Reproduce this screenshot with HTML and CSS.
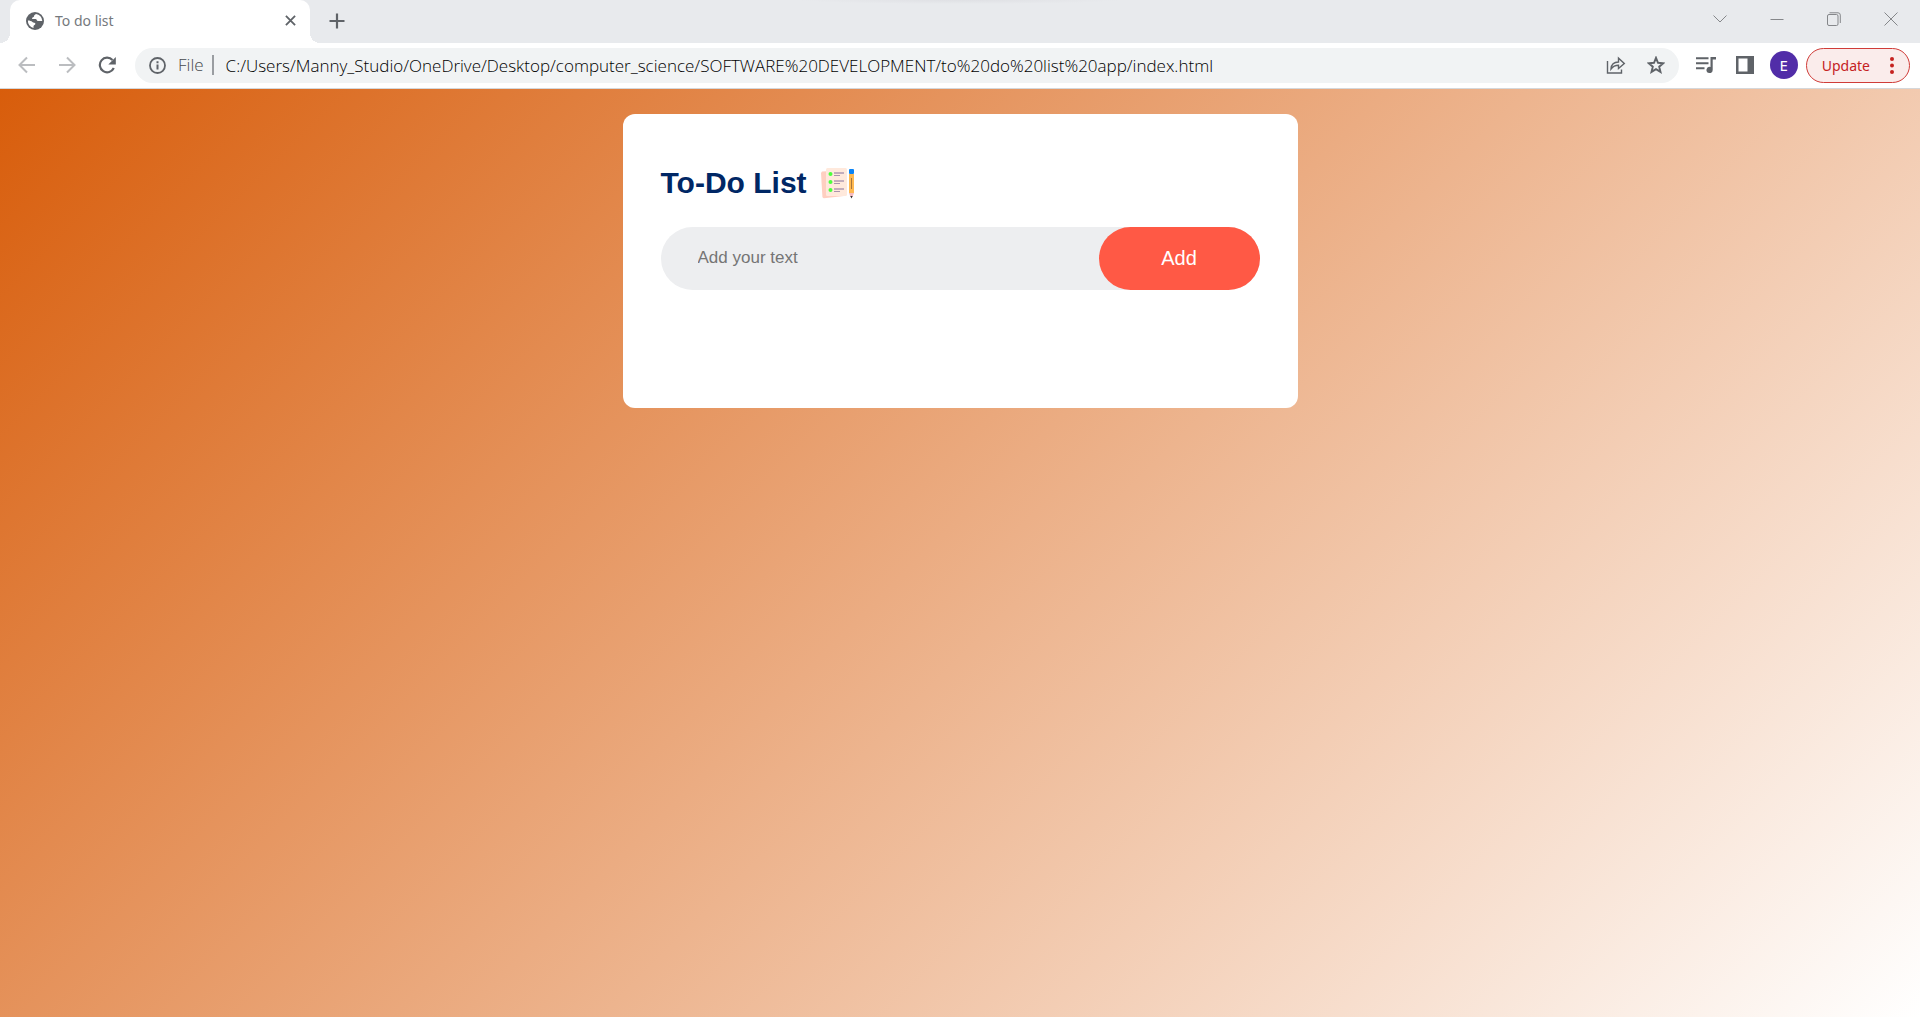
FILE: index.html
```html
<!DOCTYPE html>
<html lang="en">
<head>
<meta charset="utf-8">
<title>To do list</title>
<link rel="stylesheet" href="styles.css">
</head>
<body>
<header class="browser">
  <div class="tabstrip">
    <div class="tab">
      <svg class="globe" viewBox="0 0 18 18" aria-hidden="true"><circle cx="9" cy="9" r="9" fill="#5f6368"/><path d="M10 2c-1 1-2 1-2 2.200s-2 .800-2 2.200c0 1.100 2 .600 3.500.600 1.500 0 1 2 2.500 2h4.300A7.300 7.300 0 0 0 10 2zM1.900 8.500c1.800 0 3.600.500 4.500 1.500.8.900 3 .300 3 1.800 0 1.400-1.900 1-1.900 2.400v1.900A7.200 7.200 0 0 1 1.900 8.500z" fill="#fff"/></svg>
      <span class="tab-title">To do list</span>
      <button class="icon-button tab-close" aria-label="Close tab"><svg width="11" height="11" viewBox="0 0 12 12"><path d="M1 1l10 10M11 1L1 11" stroke="#5f6368" stroke-width="2"/></svg></button>
    </div>
    <button class="icon-button new-tab" aria-label="New tab"><svg width="16" height="16" viewBox="0 0 16 16"><path d="M8 .5v15M.5 8h15" stroke="#5f6368" stroke-width="2.200"/></svg></button>
    <div class="window-controls">
      <button class="icon-button" aria-label="Search tabs"><svg width="14" height="14" viewBox="0 0 14 14"><path d="M.5 3.500L7 10l6.500-6.500"/></svg></button>
      <button class="icon-button" aria-label="Minimize"><svg width="14" height="14" viewBox="0 0 14 14"><path d="M.5 7.500h13"/></svg></button>
      <button class="icon-button" aria-label="Restore"><svg width="14" height="14" viewBox="0 0 14 14"><rect x=".5" y="2.500" width="10.500" height="11" rx="1.500"/><path d="M2.500.8h8.500a2.300 2.300 0 0 1 2.300 2.300V11"/></svg></button>
      <button class="icon-button" aria-label="Close"><svg width="14" height="14" viewBox="0 0 14 14"><path d="M.5.5l13 13M13.500.5l-13 13"/></svg></button>
    </div>
  </div>
  <div class="toolbar">
    <nav class="nav-buttons">
      <button class="icon-button" aria-label="Back"><svg width="18" height="18" viewBox="0 0 18 18"><path d="M17 9H2M9 1.500L1.500 9 9 16.500" fill="none" stroke="#bbbdc0" stroke-width="2"/></svg></button>
      <button class="icon-button" aria-label="Forward"><svg width="18" height="18" viewBox="0 0 18 18"><path d="M1 9h15M9 1.500L16.500 9 9 16.500" fill="none" stroke="#bbbdc0" stroke-width="2"/></svg></button>
      <button class="icon-button" aria-label="Reload"><svg width="18" height="18" viewBox="0 0 18 18"><path d="M15.800 12A7.300 7.300 0 1 1 14.500 4" fill="none" stroke="#5f6368" stroke-width="2.200"/><path d="M17.800 1v7.500H10.300z" fill="#5f6368"/></svg></button>
    </nav>
    <div class="omnibox">
      <svg width="17" height="17" viewBox="0 0 17 17" aria-hidden="true"><circle cx="8.500" cy="8.500" r="7.500" fill="none" stroke="#5f6368" stroke-width="1.800"/><path d="M8.500 7.500v5M8.500 4.200v2" stroke="#5f6368" stroke-width="2"/></svg>
      <label class="scheme" for="url">File</label>
      <input class="url" id="url" type="text" value="C:/Users/Manny_Studio/OneDrive/Desktop/computer_science/SOFTWARE%20DEVELOPMENT/to%20do%20list%20app/index.html">
      <button class="icon-button" aria-label="Share"><svg width="20" height="18" viewBox="0 0 20 18"><path d="M1.500 5v12h14v-3.500M5 13c.3-4.500 2.700-7 7.500-7V2.200L18.300 7.500 12.500 12.500V9.300C9 9.300 7 10.300 5 13z" fill="none" stroke="#5f6368" stroke-width="1.400"/></svg></button>
      <button class="icon-button" aria-label="Bookmark"><svg width="18" height="18" viewBox="0 0 18 18"><path d="M9 1.800l2 5 5.300.4-4.100 3.500 1.300 5.200L9 13.100l-4.500 2.800 1.300-5.200L1.700 7.200 7 6.800z" fill="none" stroke="#5f6368" stroke-width="1.900"/></svg></button>
    </div>
    <div class="actions">
      <button class="icon-button" aria-label="Media controls"><svg width="20" height="16" viewBox="0 0 20 16"><path d="M0 1.200h12.500M0 6.200h12.500M0 11.200h8.500" stroke="#5f6368" stroke-width="2"/><path d="M14.500 0H20v2.500h-3.300V13a3.100 3.100 0 1 1-2.200-3z" fill="#5f6368"/></svg></button>
      <button class="icon-button" aria-label="Side panel"><svg width="18" height="18" viewBox="0 0 18 18"><path d="M0 0h18v18H0zM2.500 2.500v13h9v-13z" fill="#5f6368" fill-rule="evenodd"/></svg></button>
      <button class="avatar" aria-label="Profile">E</button>
      <button class="update">Update <svg width="4" height="17" viewBox="0 0 4 17" aria-hidden="true"><g fill="#c5221f"><circle cx="2" cy="2" r="2"/><circle cx="2" cy="8.500" r="2"/><circle cx="2" cy="15" r="2"/></g></svg></button>
    </div>
  </div>
</header>
<main class="page">
  <section class="todo">
    <h1 class="title">To-Do List
      <svg width="38" height="38" viewBox="0 0 38 38" aria-hidden="true">
        <path d="M3 7.500l18-1 4 25.500-20 2.200a1.500 1.500 0 0 1-1.600-1.400L2 9z" fill="#ffcfc1"/>
        <rect x="7" y="4" width="21" height="28" rx="1.500" fill="#ffe9dc"/>
        <g fill="#4cff3d"><circle cx="11.500" cy="10" r="2"/><circle cx="11.500" cy="18" r="2"/><circle cx="11.500" cy="26" r="2"/></g>
        <path d="M15 9h10M15 17h10M15 25h10" stroke="#86709a" stroke-width="1"/>
        <path d="M15 11.500h6M15 19.500h6M15 27.500h6" stroke="#a994ae" stroke-width="1"/>
        <path d="M30 10h5v19h-5z" fill="#ffb951"/><path d="M32.500 14v11" stroke="#a7763d"/>
        <rect x="30" y="5" width="5" height="5" rx="1" fill="#0b84f5"/>
        <path d="M30 29h5l-1.500 4h-2z" fill="#f5bac0"/><path d="M31.300 32h2.400l-1.200 2.500z" fill="#333"/>
      </svg>
    </h1>
    <form class="row">
      <input class="entry" type="text" placeholder="Add your text" aria-label="New task">
      <button class="add" type="button">Add</button>
    </form>
  </section>
</main>
</body>
</html>
```
FILE: styles.css
```css
* { box-sizing: border-box; }
body {
  margin: 0;
  min-height: 100vh;
  display: flex;
  flex-direction: column;
  font-family: "Liberation Sans", Arial, sans-serif;
}
button, input { font: inherit; border: 0; margin: 0; outline: 0; background: none; }
svg { display: block; flex: none; }

.browser {
  background: #fff;
  border-bottom: 1px solid #d5d7da;
  font-family: "Noto Sans", "Open Sans", sans-serif;
}
.tabstrip {
  display: flex;
  align-items: center;
  height: 43px;
  padding-left: 10px;
  background: radial-gradient(ellipse 160px 4px at 50% 0, #dfe0e4, transparent) #e8eaed;
}
.tab {
  position: relative;
  display: flex;
  align-items: center;
  gap: 11px;
  width: 300px;
  height: 43px;
  padding: 0 14px 2px 16px;
  border-radius: 10px 10px 0 0;
  background: #fff;
}
.tab::before, .tab::after {
  content: "";
  position: absolute;
  bottom: 0;
  width: 10px;
  height: 10px;
}
.tab::before { right: 100%; background: radial-gradient(circle at 0 0, transparent 10px, #fff 10px); }
.tab::after { left: 100%; background: radial-gradient(circle at 100% 0, transparent 10px, #fff 10px); }
.globe { width: 18px; height: 18px; }
.tab-title { flex: 1; font-size: 14px; line-height: 20px; color: #75797d; }
.icon-button {
  display: flex;
  align-items: center;
  justify-content: center;
  padding: 0;
}
.new-tab { width: 54px; height: 41px; margin-bottom: 2px; }
.window-controls { display: flex; margin-left: auto; padding: 0 22px 6px 0; gap: 43px; }
.window-controls svg { fill: none; stroke: #85878a; stroke-width: 1; }

.toolbar {
  display: flex;
  align-items: center;
  height: 45px;
  padding: 0 10px 1px 18px;
}
.nav-buttons { display: flex; gap: 22px; width: 117px; }
.omnibox {
  display: flex;
  flex: 1;
  align-items: center;
  height: 35px;
  padding: 0 9px 0 14px;
  border-radius: 18px;
  background: #f1f3f4;
  gap: 12px;
}
.omnibox .icon-button { width: 28px; }
.scheme, .url {
  font-family: "Open Sans", "Noto Sans", sans-serif;
  font-size: 17px;
  font-weight: 300;
}
.scheme {
  padding-right: 8px;
  border-right: 2px solid #9a9da1;
  line-height: 20px;
  color: #45494d;
}
.url { flex: 1; min-width: 0; padding: 0; color: #000; }
.actions { display: flex; align-items: center; margin-left: 17px; gap: 20px; }
.avatar {
  width: 28px;
  height: 28px;
  margin-left: -4px;
  padding: 0;
  border-radius: 50%;
  background: #512da8;
  color: #fff;
  font-size: 15px;
}
.update {
  display: flex;
  align-items: center;
  gap: 20px;
  height: 35px;
  margin-left: -12px;
  padding: 0 15px;
  border: 1px solid #d03c38;
  border-radius: 18px;
  background: #faeceb;
  color: #c5221f;
  font-size: 14px;
}

.page {
  flex: 1;
  padding: 25px;
  background: linear-gradient(135deg, #d85d0b, #fff);
}
.todo {
  max-width: 675px;
  margin: 0 auto;
  padding: 50px 38px 118px;
  border-radius: 12px;
  background: #fff;
}
.title {
  display: flex;
  align-items: center;
  gap: 12px;
  height: 38px;
  margin: 0 0 25px;
  color: #002765;
  font-size: 30px;
}
.row {
  display: flex;
  border-radius: 32px;
  background: #edeef0;
}
.entry { flex: 1; min-width: 0; padding: 0 37px 2px; font-size: 17px; color: #333; }
.entry::placeholder { color: #757575; }
.add {
  width: 161px;
  height: 63px;
  border-radius: 32px;
  background: #ff5945;
  color: #fff;
  font-size: 20px;
}
```
